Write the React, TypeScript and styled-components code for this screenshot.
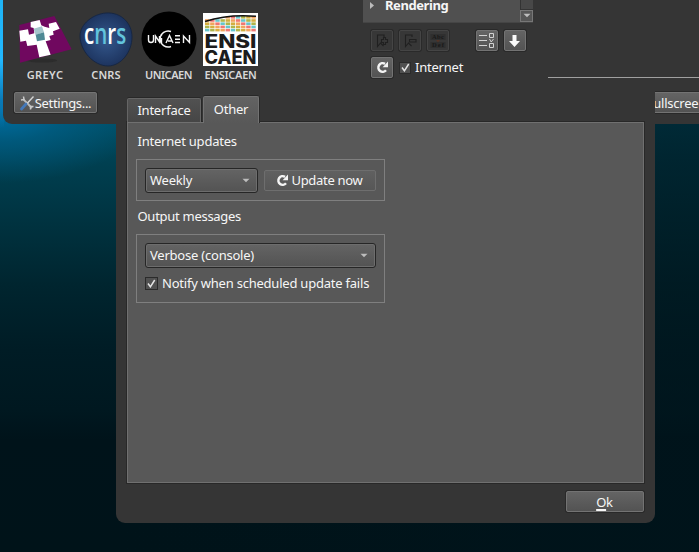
import React from "react";
import styled, { createGlobalStyle, css } from "styled-components";

const GlobalStyle = createGlobalStyle`
  * { box-sizing: border-box; }
  body { margin: 0; overflow: hidden; background: #00141b; }
`;

const Desktop = styled.div`
  position: relative;
  width: 699px;
  height: 552px;
  overflow: hidden;
  font: 13px/18px "Noto Sans", "Open Sans", sans-serif;
  color: #f6f6f6;
  background:
    linear-gradient(#1fb4f5 0, #22b8ff 60px, #0a7ab8 100px, transparent 128px) 0 0 / 4px 130px no-repeat,
    radial-gradient(ellipse 150px 75px at 0 108px, #0070a6 0, rgba(0, 100, 145, 0.6) 45%, transparent 100%),
    linear-gradient(90deg, transparent 17%, rgba(0, 20, 27, 0.62) 95%),
    linear-gradient(#004e64 0, #004e64 120px, #003f50 165px, #00323f 225px, #00252f 285px, #001c25 350px, #001820 410px, #00131a 440px, #001319 552px);
`;

const MainWindow = styled.section`
  position: absolute;
  left: 3px;
  top: 0;
  width: 720px;
  height: 124px;
  display: flex;
  flex-direction: column;
  background: #353535;
  border-radius: 0 0 0 9px;
`;

const WindowBody = styled.div`
  display: flex;
  height: 92px;
`;

const LogoStrip = styled.div`
  display: flex;
  width: 360px;
  padding: 11px 0 0 12px;
`;

const Logo = styled.figure<{ $w: number; $ls: number }>`
  margin: 0;
  width: ${(p) => p.$w}px;
  display: flex;
  flex-direction: column;
  align-items: center;
  svg { display: block; }
  figcaption {
    margin-top: 1px;
    font: 600 11px/14px "Noto Sans", sans-serif;
    letter-spacing: ${(p) => p.$ls}px;
    color: #d8d8d8;
    white-space: nowrap;
  }
`;

const FilterPanel = styled.div`
  width: 171px;
`;

const FilterList = styled.div`
  display: flex;
  width: 170px;
  height: 23px;
  background: #505050;
  border-bottom: 1px solid #454545;
`;

const FilterRow = styled.div`
  flex: 1;
  display: flex;
  align-items: flex-start;
  gap: 11px;
  padding-left: 7px;
  svg { margin-top: 2px; }
  b { margin-top: -3px; }
`;

const ScrollColumn = styled.div`
  width: 13px;
  display: flex;
  flex-direction: column;
  background: #484848;
`;

const ScrollGroove = styled.div`
  height: 10px;
  border-left: 1px solid #333;
  border-bottom: 1px solid #343434;
`;

const ScrollDown = styled.div`
  height: 13px;
  display: grid;
  place-items: center;
  border: 1px solid #777;
  background: #565656;
`;

const ToolRow = styled.div<{ $top: number }>`
  display: flex;
  align-items: center;
  gap: 6px;
  margin-top: ${(p) => p.$top}px;
  padding-left: 8px;
`;

const raised = css`
  border: 1px solid #737373;
  border-radius: 2px;
  box-shadow: 0 0 0 1px #292929;
  background: linear-gradient(#646464, #535353);
`;

const ToolButton = styled.button<{ $off?: boolean; $gap?: number }>`
  width: 22px;
  height: 21px;
  padding: 0;
  display: grid;
  place-items: center;
  flex: none;
  margin-left: ${(p) => p.$gap ?? 0}px;
  ${raised}
  ${(p) =>
    p.$off &&
    css`
      border-color: #454545;
      background: #373737;
      box-shadow: 0 0 0 1px #2a2a2a;
    `}
`;

const PreviewEdge = styled.div`
  width: 170px;
  height: 78px;
  margin-left: 14px;
  border-bottom: 1px solid #a0a0a0;
`;

const WindowFooter = styled.div`
  display: flex;
  justify-content: space-between;
  padding: 0 0 0 11px;
`;

const PushButton = styled.button<{ $w: number; $flat?: boolean; $pull?: number; $gap?: number }>`
  width: ${(p) => p.$w}px;
  height: 21px;
  margin: 0 ${(p) => p.$pull ?? 0}px 0 0;
  padding: 0 1px 0 0;
  display: flex;
  align-items: center;
  justify-content: center;
  gap: ${(p) => p.$gap ?? 0}px;
  flex: none;
  font: inherit;
  color: inherit;
  white-space: nowrap;
  ${raised}
  ${(p) =>
    p.$flat &&
    css`
      border-color: #6e6e6e;
      box-shadow: none;
      background: linear-gradient(#606060, #575757);
    `}
`;

const Label = styled.span<{ $ls?: number; $low?: boolean }>`
  display: block;
  line-height: ${(p) => (p.$low ? 18 : 16)}px;
  padding-bottom: ${(p) => (p.$low ? 0 : 2)}px;
  letter-spacing: ${(p) => p.$ls ?? -0.22}px;
  white-space: nowrap;
`;

const Dialog = styled.section`
  position: absolute;
  left: 116px;
  top: 88px;
  width: 539px;
  height: 435px;
  padding: 8px 11px 0 11px;
  display: flex;
  flex-direction: column;
  background: #353535;
  border-radius: 0 0 9px 9px;
`;

const Tabs = styled.nav`
  display: flex;
  align-items: flex-end;
  height: 26px;
  gap: 2px;
`;

const Tab = styled.div<{ $active?: boolean; $w: number }>`
  width: ${(p) => p.$w}px;
  height: ${(p) => (p.$active ? 27 : 24)}px;
  margin-bottom: ${(p) => (p.$active ? -1 : 0)}px;
  padding-bottom: ${(p) => (p.$active ? 1 : 0)}px;
  display: grid;
  place-items: center;
  border: 1px solid ${(p) => (p.$active ? "#727272" : "#656565")};
  border-bottom: 0;
  border-radius: 2px 2px 0 0;
  box-shadow: 0 -1px 0 #282828, 1px 0 0 #282828;
  background: ${(p) => (p.$active ? "linear-gradient(#636363, #585858)" : "linear-gradient(#515151, #464646)")};
  z-index: ${(p) => (p.$active ? 1 : 0)};
`;

const Pane = styled.div`
  height: 361px;
  padding: 10px 8px;
  border: 1px solid #707070;
  box-shadow: 0 0 0 1px #282828;
  background: #585858;
`;

const GroupTitle = styled.h2<{ $top?: number }>`
  margin: ${(p) => p.$top ?? 0}px 0 8px 1.5px;
  height: 18px;
  font: inherit;
`;

const Group = styled.div<{ $h: number }>`
  width: 249px;
  height: ${(p) => p.$h}px;
  padding: 8px 8px 0;
  border: 1px solid #7f7f7f;
`;

const Line = styled.div<{ $gap: number; $top?: number }>`
  display: flex;
  align-items: center;
  gap: ${(p) => p.$gap}px;
  margin-top: ${(p) => p.$top ?? 0}px;
`;

const Combo = styled.div<{ $w: number }>`
  width: ${(p) => p.$w}px;
  height: 25px;
  padding: 0 7px 0 4px;
  display: flex;
  align-items: center;
  justify-content: space-between;
  border: 1px solid #262626;
  border-radius: 3px;
  box-shadow: inset 0 0 0 1px #6d6d6d;
  background: linear-gradient(#646464, #535353);
`;

const Box = styled.span<{ $size: number }>`
  width: ${(p) => p.$size}px;
  height: ${(p) => p.$size}px;
  display: grid;
  place-items: center;
  flex: none;
  border: 1px solid #2b2b2b;
  background: #515151;
`;

const DialogFooter = styled.footer`
  display: flex;
  justify-content: flex-end;
  padding-top: 8px;
`;

const Accel = styled.u`
  text-decoration-thickness: 2px;
  text-underline-offset: 2px;
  text-decoration-skip-ink: none;
`;

const CheckMark = () => (
  <svg width="9" height="9" viewBox="0 0 9 9">
    <path d="M1 4.500L3.400 7.800L7.700 1" fill="none" stroke="#e4e4e4" strokeWidth="1.500" />
  </svg>
);

const Caret = () => (
  <svg width="8" height="5" viewBox="0 0 8 5">
    <path d="M.5 .7h7L4 4.300z" fill="#bdbdbd" />
  </svg>
);

const Refresh = () => (
  <svg width="13" height="13" viewBox="0 0 13 13">
    <path d="M10 9.300A4.300 4.300 0 1 1 9 2.900" fill="none" stroke="#f4f4f4" strokeWidth="2.500" />
    <path d="M12 .6v5.600H6.600z" fill="#f4f4f4" />
  </svg>
);

const Bookmark = ({ add }: { add?: boolean }) => (
  <svg width="16" height="16" viewBox="0 0 16 16" fill="none" stroke="#202020" strokeWidth="1.100">
    <path d="M10 4V2H3.500v11.500L6.500 10l3 3" />
    {add ? <path d="M9.500 4.500h2v2h2v3h-2v2h-2v-2h-2v-3h2z" /> : <path d="M7.500 6.500h6.500v2.500H7.500z" />}
  </svg>
);

const Rename = () => (
  <svg width="16" height="16" viewBox="0 0 16 16">
    <rect x=".5" y="1" width="15" height="6" fill="#2f2f2f" />
    <rect x=".5" y="9" width="15" height="6" fill="#2f2f2f" />
    <g fontFamily="Liberation Serif" fontSize="6.500" fontWeight="700" fill="#191919">
      <text x="2" y="6.300" textLength="12">Abc</text>
      <text x="2" y="14.300" textLength="12">Def</text>
    </g>
    <path d="M6 7h4l-2 2.500z" fill="#513326" />
  </svg>
);

const ChecklistIcon = () => (
  <svg width="18" height="17" viewBox="0 0 18 17" fill="none" stroke="#d2d2d2">
    <path d="M1 3.500h8M1 8.500h8M1 13.500h8" />
    <path d="M11.500 1.500h4v4h-4zM11.500 11.500h4v4h-4zM11.500 7l1.700 3 2.300-3" />
  </svg>
);

const ArrowDown = () => (
  <svg width="12" height="14" viewBox="0 0 12 14">
    <path d="M3.500 1h4v6H11L5.500 13 0 7h3.500z" fill="#fafafa" />
  </svg>
);

const Tools = () => (
  <svg width="16" height="16" viewBox="0 0 16 16" fill="none">
    <path d="M4 4l9 9" stroke="#bcbcbc" strokeWidth="1.800" />
    <path d="M4.500 1.500L5 4.500 2 5M11.500 14.500l0-3 3 0" stroke="#c9c9c9" strokeWidth="1.500" />
    <path d="M14.500 1.500L8 8.500" stroke="#d5d5d5" strokeWidth="1.400" />
    <path d="M7 9l-4.500 5" stroke="#4478b9" strokeWidth="2.800" strokeLinecap="round" />
  </svg>
);

const GreycLogo = () => (
  <svg width="56" height="56" viewBox="0 0 56 56">
    <ellipse cx="25" cy="49.500" rx="15" ry="2" fill="#2c2c2c" />
    <g transform="translate(-17 -11) scale(.3333)">
      <path d="M58 75L163 48 215 148 60 188z" fill="#70085f" />
      <path d="M58 92L84 88 87 104 103 100 101 84 92 82 92 66 119 60 124 76 134 80 148 84 146 71 168 66 179 86 159 94 161 104 148 108 152 120 137 124 152 164 118 172 110 134 82 138 78 122 61 125z" fill="#fff" />
      <path d="M101 86L126 79 132 97 107 105z" fill="#a5c5cb" />
      <path d="M107 104L132 97 135 119 111 124z" fill="#4e8994" />
    </g>
  </svg>
);

const CnrsLogo = () => (
  <svg width="56" height="56" viewBox="0 0 56 56">
    <defs>
      <radialGradient id="cnrsBlue"><stop stopColor="#34588d" /><stop offset="1" stopColor="#1d345f" /></radialGradient>
    </defs>
    <path d="M28 2C43 1 54 12 54 26 54 41 43 55 30 55 16 55 2 40 2 25 2 13 15 3 28 2z" fill="url(#cnrsBlue)" stroke="#172743" />
    <text transform="translate(6 33) scale(.71 1)" fontFamily="Open Sans" fontSize="29" fontWeight="600" fill="#fff">
      c<tspan fill="#62c4dc">n</tspan>r<tspan fill="#62c4dc">s</tspan>
    </text>
  </svg>
);

const UnicaenLogo = () => (
  <svg width="56" height="56" viewBox="0 0 56 56">
    <circle cx="28" cy="28" r="27.500" fill="#000" />
    <g fill="none" stroke="#f5f5f5" strokeWidth="1.400">
      <path d="M7.500 24v5q0 2.500 2.500 2.500 2.500 0 2.500-2.500v-5M14.500 32v-7l4 6v-6M20.500 27v5M34 24.700h5M34 28.200h5M34 31.500h5M42.500 32v-7l6 6.500V24" />
      <path d="M30 20.500a8 8 0 1 0 0 15M25 32l3.500-7.500L32 32M27 30h4" />
    </g>
    <circle cx="20.500" cy="24" r=".8" fill="#fff" />
  </svg>
);

const tileColors = ["#ef7772", "#d5ae3f", "#66c5cc", "#f2a45d", "#b0b54a"];

const EnsicaenLogo = () => (
  <svg width="56" height="56" viewBox="0 0 56 56">
    <rect x="0" y="2" width="55" height="53" fill="#fff" />
    {Array.from({ length: 50 }, (_, i) => {
      const col = i % 10;
      const row = Math.floor(i / 10);
      return row === 0 && col < 4 ? null : (
        <rect key={i} x={2 + col * 5.150} y={5 + row * 3.200} width="4.400" height="2.600" fill={tileColors[(col * 2 + row * 3) % 5]} />
      );
    })}
    <path d="M2 10.500Q25 3 53 5.300" stroke="#111" strokeWidth="1.500" fill="none" />
    <g fontFamily="Inter" fontSize="18.500" fontWeight="800" fill="#1c1c1c">
      <text x="1.500" y="36.800" textLength="52" lengthAdjust="spacingAndGlyphs">ENSI</text>
      <text x="1.500" y="53.300" textLength="52" lengthAdjust="spacingAndGlyphs">CAEN</text>
    </g>
  </svg>
);

export default function App() {
  return (
    <>
      <GlobalStyle />
      <Desktop>
        <MainWindow>
          <WindowBody>
            <LogoStrip>
              <Logo $w={60} $ls={0.4}><GreycLogo /><figcaption>GREYC</figcaption></Logo>
              <Logo $w={62} $ls={0.1}><CnrsLogo /><figcaption>CNRS</figcaption></Logo>
              <Logo $w={63} $ls={-0.5}><UnicaenLogo /><figcaption>UNICAEN</figcaption></Logo>
              <Logo $w={61} $ls={-0.3}><EnsicaenLogo /><figcaption>ENSICAEN</figcaption></Logo>
            </LogoStrip>
            <FilterPanel>
              <FilterList>
                <FilterRow>
                  <svg width="4" height="7" viewBox="0 0 4 7"><path d="M0 0l4 3.500L0 7z" fill="#bcbcbc" /></svg>
                  <b><Label $ls={-0.42}>Rendering</Label></b>
                </FilterRow>
                <ScrollColumn>
                  <ScrollGroove />
                  <ScrollDown><Caret /></ScrollDown>
                </ScrollColumn>
              </FilterList>
              <ToolRow $top={7}>
                <ToolButton $off><Bookmark add /></ToolButton>
                <ToolButton $off><Bookmark /></ToolButton>
                <ToolButton $off><Rename /></ToolButton>
                <ToolButton $gap={21}><ChecklistIcon /></ToolButton>
                <ToolButton><ArrowDown /></ToolButton>
              </ToolRow>
              <ToolRow $top={6}>
                <ToolButton><Refresh /></ToolButton>
                <Line $gap={4}>
                  <Box $size={12}><CheckMark /></Box>
                  <Label>Internet</Label>
                </Line>
              </ToolRow>
            </FilterPanel>
            <PreviewEdge />
          </WindowBody>
          <WindowFooter>
            <PushButton $w={83}><Tools /><Label $low $ls={-0.3}>Settings...</Label></PushButton>
            <PushButton $w={78} $pull={7}><Label $low>Fullscreen</Label></PushButton>
          </WindowFooter>
        </MainWindow>
        <Dialog>
          <Tabs>
            <Tab $w={74}><Label>Interface</Label></Tab>
            <Tab $w={56} $active><Label>Other</Label></Tab>
          </Tabs>
          <Pane>
            <GroupTitle><Label>Internet updates</Label></GroupTitle>
            <Group $h={42}>
              <Line $gap={6}>
                <Combo $w={113}><Label>Weekly</Label><Caret /></Combo>
                <PushButton $w={112} $flat $gap={2}><Refresh /><Label $ls={-0.3}>Update now</Label></PushButton>
              </Line>
            </Group>
            <GroupTitle $top={7}><Label $ls={-0.28}>Output messages</Label></GroupTitle>
            <Group $h={69}>
              <Combo $w={231}><Label>Verbose (console)</Label><Caret /></Combo>
              <Line $gap={4} $top={6}>
                <Box $size={13}><CheckMark /></Box>
                <Label $low>Notify when scheduled update fails</Label>
              </Line>
            </Group>
          </Pane>
          <DialogFooter>
            <PushButton $w={78}><Label $low><Accel>O</Accel>k</Label></PushButton>
          </DialogFooter>
        </Dialog>
      </Desktop>
    </>
  );
}
